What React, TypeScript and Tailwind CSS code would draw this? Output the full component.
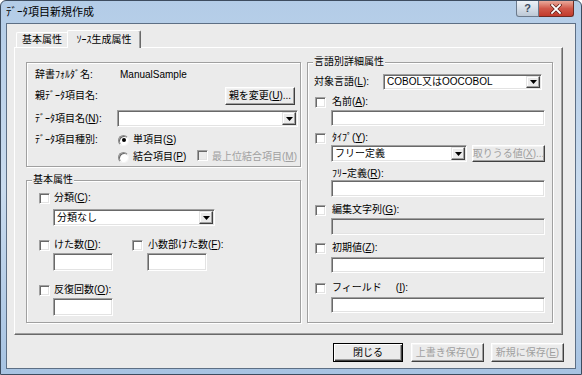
import React from "react";

const FONT = "font-['Liberation_Sans','Noto_Sans_CJK_JP',sans-serif]";

// ── small classic-Windows widgets ──────────────────────────────────────────
function Check({ disabled }: { disabled?: boolean }) {
  return (
    <span
      className={`inline-block w-[11px] h-[11px] shrink-0 border border-t-[#a0a0a0] border-l-[#a0a0a0] border-r-white border-b-white shadow-[inset_1px_1px_0_#696969,inset_-1px_-1px_0_#e3e3e3] ${
        disabled ? "bg-[#ebebeb]" : "bg-white"
      }`}
    />
  );
}

function Radio({ checked }: { checked?: boolean }) {
  return (
    <span className="relative inline-flex items-center justify-center w-[11px] h-[11px] shrink-0 rounded-full border border-t-[#8a8a8a] border-l-[#8a8a8a] border-r-[#f4f4f4] border-b-[#f4f4f4] bg-white shadow-[inset_1px_1px_0_#6a6a6a]">
      {checked && <span className="w-[4px] h-[4px] rounded-full bg-black" />}
    </span>
  );
}

function Field({ className = "", disabled, children }: { className?: string; disabled?: boolean; children?: React.ReactNode }) {
  return (
    <div
      className={`flex items-stretch p-[1px] border border-t-[#a0a0a0] border-l-[#a0a0a0] border-r-white border-b-white shadow-[inset_1px_1px_0_#696969,inset_-1px_-1px_0_#e3e3e3] ${
        disabled ? "bg-[#ebebeb]" : "bg-white"
      } ${className}`}
    >
      {children}
    </div>
  );
}

function Combo({ className = "", text }: { className?: string; text?: string }) {
  return (
    <Field className={className}>
      <span className="flex-1 flex items-center pl-[2px] leading-none whitespace-nowrap overflow-hidden">{text}</span>
      <span className="w-[14px] flex items-center justify-center bg-[#ebebeb] border border-t-[#e3e3e3] border-l-[#e3e3e3] border-r-[#404040] border-b-[#404040] shadow-[inset_-1px_-1px_0_#a0a0a0,inset_1px_1px_0_#fff]">
        <svg width="7" height="4" viewBox="0 0 7 4">
          <path d="M0 0h7L3.5 4z" fill="#000" />
        </svg>
      </span>
    </Field>
  );
}

function Btn({
  className = "",
  disabled,
  def,
  children,
}: {
  className?: string;
  disabled?: boolean;
  def?: boolean;
  children: React.ReactNode;
}) {
  const frame = def
    ? "border border-black shadow-[inset_1px_1px_0_#fff,inset_-1px_-1px_0_#404040,inset_-2px_-2px_0_#a0a0a0]"
    : "border border-t-white border-l-white border-r-[#404040] border-b-[#404040] shadow-[inset_-1px_-1px_0_#a0a0a0,inset_1px_1px_0_#f4f4f4]";
  return (
    <div
      className={`flex items-center justify-center bg-[#ebebeb] leading-none whitespace-nowrap ${frame} ${
        disabled ? "text-[#a0a0a0]" : "text-black"
      } ${className}`}
    >
      {children}
    </div>
  );
}

function GroupBox({ title, className = "", children }: { title: string; className?: string; children: React.ReactNode }) {
  return (
    <div className={`relative border border-[#a0a0a0] shadow-[inset_1px_1px_0_#fff,1px_1px_0_#fff] ${className}`}>
      <span className="absolute left-[5px] -top-[7px] bg-[#ebebeb] px-[1px] leading-[12px]">{title}</span>
      {children}
    </div>
  );
}

function CheckRow({ className = "", label, gap = "ml-[4px]" }: { className?: string; label: React.ReactNode; gap?: string }) {
  return (
    <div className={`flex items-center h-[14px] ${className}`}>
      <Check />
      <span className={`${gap} leading-none whitespace-nowrap`}>{label}</span>
    </div>
  );
}

export default function App() {
  return (
    <div
      className={`w-[582px] h-[375px] ${FONT} text-[10px] text-black flex flex-col overflow-hidden rounded-t-[6px] border border-[#3d4c5f] bg-linear-to-b from-[#b3cce7] via-[#c9dbee] to-[#a7c3e2]`}
    >
      {/* ── title bar ───────────────────────────────────────────── */}
      <div className="h-[22px] shrink-0 flex items-start">
        <span className="ml-[5px] mt-[5px] text-[11px] leading-[13px] text-black">ﾃﾞｰﾀ項目新規作成</span>
        <div className="ml-auto mr-[7px] flex">
          <div className="w-[23px] h-[16px] flex items-center justify-center rounded-bl-[3px] border border-[#6c7a8c] border-t-0 bg-linear-to-b from-[#eef2f7] via-[#d6dee8] to-[#bcc8d6] text-[11px] font-bold text-[#3b4b5e] leading-none">
            ?
          </div>
          <div className="w-[35px] h-[16px] flex items-center justify-center rounded-br-[3px] border border-[#6e2a22] border-t-0 border-l-0 bg-linear-to-b from-[#e9a99b] via-[#d0584a] to-[#c23a2c]">
            <svg width="12" height="10" viewBox="0 0 12 10">
              <path d="M2 1l8 8M10 1l-8 8" stroke="#5a1a14" strokeWidth="3.2" strokeLinecap="square" />
              <path d="M2 1l8 8M10 1l-8 8" stroke="#fff" strokeWidth="1.8" strokeLinecap="square" />
            </svg>
          </div>
        </div>
      </div>

      {/* ── client area ─────────────────────────────────────────── */}
      <div className="mx-[5px] h-[346px] shrink-0 border border-[#5d6f85] bg-[#ebebeb] flex flex-col">
        {/* tabs */}
        <div className="flex items-end h-[23px] pl-[9px]">
          <div className="w-[51px] h-[15px] flex items-center justify-center rounded-tl-[2px] border border-b-0 border-r-0 border-t-white border-l-white leading-none">
            基本属性
          </div>
          <div className="relative z-10 -mb-[1px] w-[74px] h-[18px] flex items-center justify-center rounded-t-[2px] bg-[#ebebeb] border border-b-0 border-t-white border-l-white border-r-[#696969] shadow-[inset_-1px_0_0_#a0a0a0] leading-none">
            ｿｰｽ生成属性
          </div>
        </div>

        {/* tab panel */}
        <div className="ml-[7px] w-[549px] h-[288px] border border-t-white border-l-white border-r-[#696969] border-b-[#696969] shadow-[inset_-1px_-1px_0_#a0a0a0] flex pt-[14px] pl-[11px] gap-[6px]">
          {/* left column */}
          <div className="w-[275px] flex flex-col">
            <div className="h-[105px] border border-[#a0a0a0] shadow-[inset_1px_1px_0_#fff,1px_1px_0_#fff] flex flex-col pl-[8px]">
              <div className="mt-[5px] h-[14px] flex items-center">
                <span className="w-[82px] leading-none">辞書ﾌｫﾙﾀﾞ名:</span>
                <span className="ml-[3px] leading-none">ManualSample</span>
              </div>
              <div className="mt-[5px] h-[18px] flex items-center">
                <span className="leading-none">親ﾃﾞｰﾀ項目名:</span>
                <Btn className="ml-auto mr-[5px] w-[70px] h-[18px]">
                  親を変更(<u>U</u>)...
                </Btn>
              </div>
              <div className="mt-[5px] h-[17px] flex items-center">
                <span className="w-[82px] leading-none">
                  ﾃﾞｰﾀ項目名(<u>N</u>):
                </span>
                <Combo className="w-[181px] h-[17px]" />
              </div>
              <div className="mt-[6px] h-[14px] flex items-center">
                <span className="w-[83px] leading-none">ﾃﾞｰﾀ項目種別:</span>
                <Radio checked />
                <span className="ml-[4px] leading-none">
                  単項目(<u>S</u>)
                </span>
              </div>
              <div className="mt-[3px] h-[14px] flex items-center">
                <span className="w-[83px]" />
                <Radio />
                <span className="ml-[4px] w-[60px] leading-none whitespace-nowrap">
                  結合項目(<u>P</u>)
                </span>
                <span className="ml-[4px]">
                  <Check disabled />
                </span>
                <span className="ml-[4px] leading-none text-[#a0a0a0] whitespace-nowrap">
                  最上位結合項目(<u>M</u>)
                </span>
              </div>
            </div>

            <GroupBox title="基本属性" className="mt-[13px] h-[143px] flex flex-col pl-[12px]">
              <CheckRow className="mt-[10px]" label={<>分類(<u>C</u>):</>} />
              <Combo className="ml-[14px] mt-[4px] w-[162px] h-[17px]" text="分類なし" />
              <div className="mt-[12px] h-[14px] flex items-center">
                <CheckRow className="w-[93px]" label={<>けた数(<u>D</u>):</>} />
                <CheckRow label={<>小数部けた数(<u>F</u>):</>} gap="ml-[5px]" />
              </div>
              <div className="mt-[1px] flex">
                <Field className="ml-[14px] w-[60px] h-[18px]" />
                <Field className="ml-[34px] w-[60px] h-[18px]" />
              </div>
              <CheckRow className="mt-[12px]" label={<>反復回数(<u>O</u>):</>} />
              <Field className="ml-[14px] mt-[1px] w-[60px] h-[18px]" />
            </GroupBox>
          </div>

          {/* right column */}
          <GroupBox title="言語別詳細属性" className="w-[246px] h-[261px] flex flex-col pl-[6px]">
            <div className="mt-[11px] h-[16px] flex items-center">
              <span className="w-[69px] leading-none">
                対象言語(<u>L</u>):
              </span>
              <Combo className="w-[159px] h-[16px]" text="COBOL又はOOCOBOL" />
            </div>
            <CheckRow className="mt-[5px] ml-[1px]" label={<>名前(<u>A</u>):</>} gap="ml-[6px]" />
            <Field className="ml-[17px] mt-[1px] w-[214px] h-[16px]" />
            <CheckRow className="mt-[5px] ml-[1px]" label={<>ﾀｲﾌﾟ(<u>Y</u>):</>} gap="ml-[6px]" />
            <div className="ml-[17px] flex gap-[5px]">
              <Combo className="w-[136px] h-[17px]" text="フリー定義" />
              <Btn disabled className="w-[73px] h-[17px]">
                取りうる値(<u>X</u>)...
              </Btn>
            </div>
            <span className="ml-[18px] mt-[6px] h-[12px] leading-[12px]">
              ﾌﾘｰ定義(<u>R</u>):
            </span>
            <Field className="ml-[17px] w-[214px] h-[17px]" />
            <CheckRow className="mt-[6px] ml-[1px]" label={<>編集文字列(<u>G</u>):</>} gap="ml-[6px]" />
            <Field disabled className="ml-[17px] mt-[1px] w-[214px] h-[17px]" />
            <CheckRow className="mt-[6px] ml-[1px]" label={<>初期値(<u>Z</u>):</>} gap="ml-[6px]" />
            <Field className="ml-[17px] mt-[2px] w-[214px] h-[16px]" />
            <CheckRow
              className="mt-[8px] ml-[1px]"
              label={
                <>
                  フィールド<span className="ml-[14px]">(<u>I</u>):</span>
                </>
              }
              gap="ml-[6px]"
            />
            <Field className="ml-[17px] mt-[2px] w-[214px] h-[16px]" />
          </GroupBox>
        </div>

        {/* dialog buttons */}
        <div className="mt-[8px] flex justify-end pr-[11px]">
          <Btn def className="w-[70px] h-[19px]">
            閉じる
          </Btn>
          <Btn disabled className="ml-[8px] w-[73px] h-[19px]">
            上書き保存(<u>V</u>)
          </Btn>
          <Btn disabled className="ml-[7px] w-[73px] h-[19px]">
            新規に保存(<u>E</u>)
          </Btn>
        </div>
      </div>
    </div>
  );
}
